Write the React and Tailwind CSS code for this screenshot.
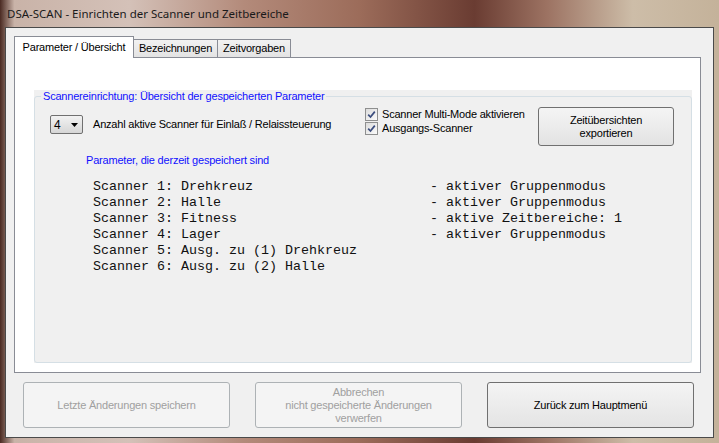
import React from 'react';

const rows = [
  ['Scanner 1: Drehkreuz', '- aktiver Gruppenmodus'],
  ['Scanner 2: Halle', '- aktiver Gruppenmodus'],
  ['Scanner 3: Fitness', '- aktive Zeitbereiche: 1'],
  ['Scanner 4: Lager', '- aktiver Gruppenmodus'],
  ['Scanner 5: Ausg. zu (1) Drehkreuz', ''],
  ['Scanner 6: Ausg. zu (2) Halle', ''],
];

function Check({ label }) {
  return (
    <div className="flex h-[14px] items-center gap-[4px]">
      <span className="flex h-[13px] w-[13px] items-center justify-center border border-[#8e8f8f] bg-[linear-gradient(135deg,#dcdcdc,#fbfbfb)]">
        <svg width="9" height="9" viewBox="0 0 9 9">
          <path d="M1.2 4.6 L3.5 7 L7.8 1.6" fill="none" stroke="#3b4d7e" strokeWidth="1.7" />
        </svg>
      </span>
      <span>{label}</span>
    </div>
  );
}

export default function App() {
  return (
    <div className="h-[443px] w-[719px] overflow-hidden bg-[linear-gradient(90deg,#4a2a22_0%,#c9b3a8_2%,#d4c1b8_18%,#b38a7a_34%,#9c6c5a_50%,#6a3c32_66%,#9c7262_76%,#cdbda8_88%,#c4b29a_100%)] font-['Liberation_Sans',sans-serif] text-[11px] tracking-[-0.2px] text-black">
      <div className="flex h-[27px] items-center pl-[7px] font-['Noto_Sans',sans-serif] text-[11.5px] tracking-normal text-[#1a1a1a]">
        DSA-SCAN - Einrichten der Scanner und Zeitbereiche
      </div>
      <div className="ml-[5px] h-[411px] w-[709px] border border-[#4a4a4a] bg-[#f0f0f0] px-[8px] pt-[8px]">
        <div className="flex h-[21px] items-end">
          <div className="relative z-10 -mb-px flex h-[22px] w-[120px] items-start justify-center border border-b-0 border-[#898c95] bg-white pt-[2px]">
            Parameter / Übersicht
          </div>
          <div className="flex h-[18px] w-[84px] items-center justify-center border border-b-0 border-l-0 border-[#898c95] bg-[linear-gradient(#f2f2f2,#e3e3e3)]">
            Bezeichnungen
          </div>
          <div className="flex h-[18px] w-[73px] items-center justify-center border border-b-0 border-l-0 border-[#898c95] bg-[linear-gradient(#f2f2f2,#e3e3e3)]">
            Zeitvorgaben
          </div>
        </div>
        <div className="h-[316px] w-[687px] border border-[#898c95] bg-white pl-[19px] pt-[32px]">
          <div className="h-[273px] w-[658px] bg-[#f0f0f0]">
            <fieldset className="h-full rounded-[3px] border border-[#d5dfe5] px-[15px]">
              <legend className="-ml-[9px] px-[2px] leading-[13px] text-[#1010ff]">
                Scannereinrichtung: Übersicht der gespeicherten Parameter
              </legend>
              <div className="mt-[4px] flex items-start">
                <div className="mt-[8px] flex w-[315px] items-center">
                  <div className="flex h-[19px] w-[33px] items-center justify-between rounded-[2px] border border-[#707070] bg-[linear-gradient(#f2f2f2,#e4e4e4_50%,#d6d6d6)] pl-[3px] pr-[4px] text-[12px]">
                    <span>4</span>
                    <svg width="7" height="4" viewBox="0 0 7 4">
                      <path d="M0 0 H7 L3.5 4 Z" fill="#000" />
                    </svg>
                  </div>
                  <span className="ml-[10px]">Anzahl aktive Scanner für Einlaß / Relaissteuerung</span>
                </div>
                <div className="w-[173px]">
                  <Check label="Scanner Multi-Mode aktivieren" />
                  <Check label="Ausgangs-Scanner" />
                </div>
                <div className="flex h-[39px] w-[136px] flex-col items-center justify-center rounded-[3px] border border-[#707070] bg-[linear-gradient(#f4f4f4,#ececec_50%,#e2e2e2)] leading-[13px]">
                  <span>Zeitübersichten</span>
                  <span>exportieren</span>
                </div>
              </div>
              <div className="mt-[8px] pl-[36px] leading-[13px] text-[#1010ff]">
                Parameter, die derzeit gespeichert sind
              </div>
              <div className="mt-[12px] pl-[43px] font-['Liberation_Mono',monospace] text-[13.33px] leading-[16px] tracking-normal text-[#111]">
                {rows.map(([a, b]) => (
                  <div key={a} className="flex whitespace-pre">
                    <span className="w-[337px]">{a}</span>
                    <span>{b}</span>
                  </div>
                ))}
              </div>
            </fieldset>
          </div>
        </div>
        <div className="mt-[9px] flex gap-[25px] pl-[9px]">
          <div className="flex h-[46px] w-[207px] items-center justify-center rounded-[3px] border border-[#adb2b5] bg-[#f4f4f4] text-[#a0a0a0]">
            Letzte Änderungen speichern
          </div>
          <div className="flex h-[46px] w-[207px] flex-col items-center justify-center rounded-[3px] border border-[#adb2b5] bg-[#f4f4f4] leading-[13px] text-[#a0a0a0]">
            <span>Abbrechen</span>
            <span>nicht gespeicherte Änderungen</span>
            <span>verwerfen</span>
          </div>
          <div className="flex h-[46px] w-[207px] items-center justify-center rounded-[3px] border border-[#707070] bg-[linear-gradient(#f4f4f4,#ececec_50%,#e4e4e4)]">
            Zurück zum Hauptmenü
          </div>
        </div>
      </div>
    </div>
  );
}
